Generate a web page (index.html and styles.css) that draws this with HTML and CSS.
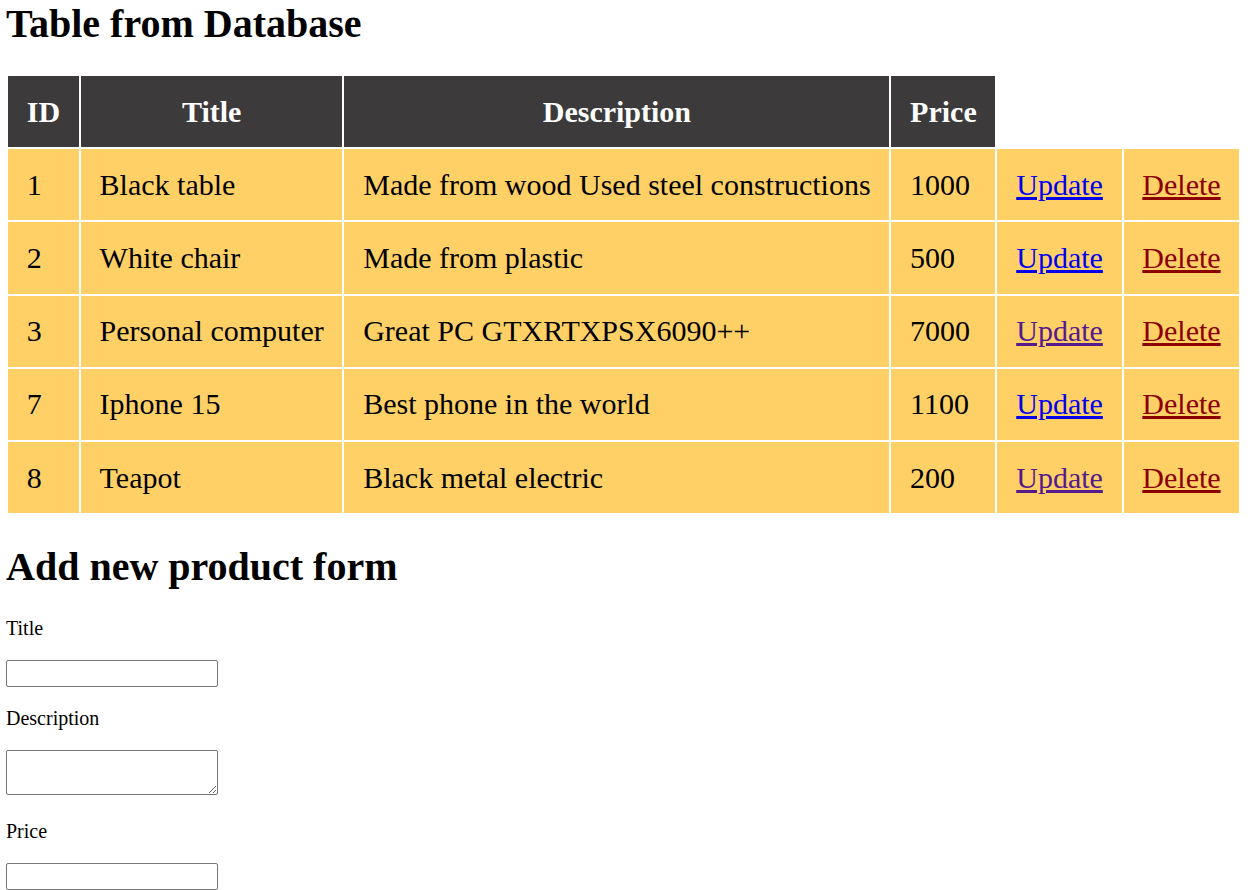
FILE: index.html
```html
<!DOCTYPE html>
<html>
<head>
<meta charset="utf-8">
<title>Table from Database</title>
<link rel="stylesheet" href="styles.css">
</head>
<body>
<h1 class="page-title">Table from Database</h1>
<table class="products">
  <thead>
    <tr>
      <th>ID</th>
      <th>Title</th>
      <th>Description</th>
      <th>Price</th>
    </tr>
  </thead>
  <tbody>
    <tr>
      <td>1</td><td>Black table</td><td>Made from wood Used steel constructions</td><td>1000</td>
      <td><a class="upd" href="#">Update</a></td><td><a class="del" href="#">Delete</a></td>
    </tr>
    <tr>
      <td>2</td><td>White chair</td><td>Made from plastic</td><td>500</td>
      <td><a class="upd" href="#">Update</a></td><td><a class="del" href="#">Delete</a></td>
    </tr>
    <tr>
      <td>3</td><td>Personal computer</td><td>Great PC GTXRTXPSX6090++</td><td>7000</td>
      <td><a class="upd visited" href="#">Update</a></td><td><a class="del" href="#">Delete</a></td>
    </tr>
    <tr>
      <td>7</td><td>Iphone 15</td><td>Best phone in the world</td><td>1100</td>
      <td><a class="upd" href="#">Update</a></td><td><a class="del" href="#">Delete</a></td>
    </tr>
    <tr>
      <td>8</td><td>Teapot</td><td>Black metal electric</td><td>200</td>
      <td><a class="upd visited" href="#">Update</a></td><td><a class="del" href="#">Delete</a></td>
    </tr>
  </tbody>
</table>
<h2 class="form-title">Add new product form</h2>
<form class="product-form">
  <p class="label">Title</p>
  <input class="field" type="text">
  <p class="label">Description</p>
  <textarea class="field area"></textarea>
  <p class="label">Price</p>
  <input class="field" type="text">
</form>
</body>
</html>
```
FILE: styles.css
```css
html, body {
  background: #ffffff;
}
body {
  margin: 0 6px;
  font-family: "Liberation Serif", "Times New Roman", serif;
  font-size: 20px;
  color: #000000;
}
.page-title {
  margin: 0 0 27px;
  font-size: 40px;
  font-weight: bold;
  line-height: 47px;
}
.products {
  border-collapse: separate;
  border-spacing: 2px;
  font-size: 30px;
}
.products th {
  background: #3c3a3b;
  color: #ffffff;
  font-weight: bold;
  text-align: center;
  padding: 18.5px 18.75px;
}
.products td {
  background: #ffd066;
  text-align: left;
  padding: 18.65px 18.75px;
}
.upd {
  color: #0000ee;
}
.upd.visited {
  color: #551a8b;
}
.del {
  color: #8b0000;
}
.form-title {
  margin: 29px 0 27px;
  font-size: 40px;
  font-weight: bold;
  line-height: 46px;
}
.product-form {
  display: flex;
  flex-direction: column;
  align-items: flex-start;
}
.label {
  margin: 0;
  line-height: 23px;
  padding-bottom: 20px;
}
.field {
  display: block;
  box-sizing: border-box;
  width: 212px;
  height: 27px;
  margin: 0 0 20px;
  border: 1px solid #767676;
  border-radius: 2px;
  background: #ffffff;
  font-family: "Liberation Sans", Arial, sans-serif;
  font-size: 16px;
}
.area {
  height: 45px;
  margin-bottom: 25px;
  resize: both;
}
```
